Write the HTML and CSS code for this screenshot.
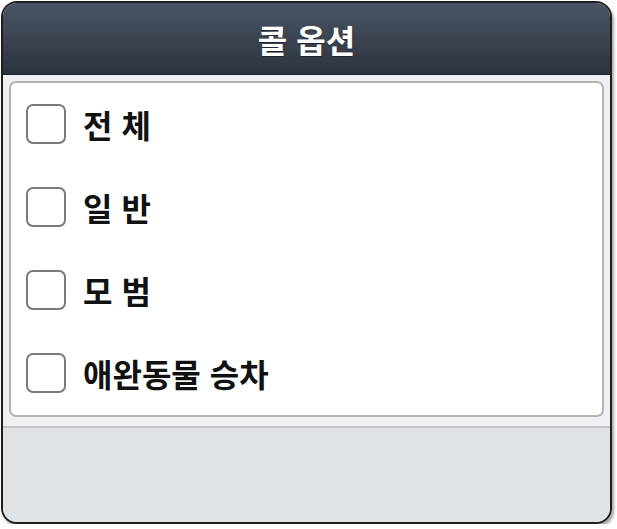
FILE: index.html
```html
<!DOCTYPE html>
<html lang="ko">
<head>
<meta charset="utf-8">
<link rel="stylesheet" href="styles.css">
</head>
<body>
<div class="dialog">
  <div class="header">콜 옵션</div>
  <div class="content">
    <div class="box">
      <label class="row"><span class="check"></span><span class="label">전 체</span></label>
      <label class="row"><span class="check"></span><span class="label">일 반</span></label>
      <label class="row"><span class="check"></span><span class="label">모 범</span></label>
      <label class="row"><span class="check"></span><span class="label">애완동물 승차</span></label>
    </div>
  </div>
  <div class="footer"></div>
</div>
</body>
</html>
```

FILE: styles.css
```css
html, body {
  margin: 0;
  padding: 0;
  background: #ffffff;
}
body {
  padding: 1px 0 0 1px;
  font-family: "Noto Sans CJK KR", "Noto Sans", sans-serif;
}
.dialog {
  width: 607px;
  height: 519px;
  border: 2px solid #1e1e1e;
  border-radius: 16px;
  overflow: hidden;
  display: flex;
  flex-direction: column;
  box-shadow: 2px 3px 3px rgba(0,0,0,0.35);
  background: #e0e3e6;
}
.header {
  height: 71px;
  border-bottom: 1px solid #1f242b;
  background: linear-gradient(#4a5464, #2d333d);
  color: #ffffff;
  font-weight: 700;
  font-size: 32px;
  display: flex;
  align-items: center;
  justify-content: center;
  text-shadow: 0 1px 1px rgba(0,0,0,0.4);
}
.content {
  background: #eef0f4;
  padding: 6px 6px 9px 6px;
  border-bottom: 2px solid #c3c4c8;
}
.box {
  background: #ffffff;
  border: 2px solid #b3b3b3;
  border-radius: 7px;
  padding: 21px 15px 22px 15px;
  display: flex;
  flex-direction: column;
  gap: 43px;
}
.row {
  display: flex;
  align-items: center;
  height: 40px;
}
.check {
  width: 36px;
  height: 36px;
  border: 2px solid #7a7a7a;
  border-radius: 7px;
  background: #ffffff;
  flex: none;
}
.label {
  margin-left: 17px;
  font-size: 32px;
  font-weight: 700;
  color: #111111;
  line-height: 40px;
}
.footer {
  flex: 1;
  background: #e0e3e6;
}
```
